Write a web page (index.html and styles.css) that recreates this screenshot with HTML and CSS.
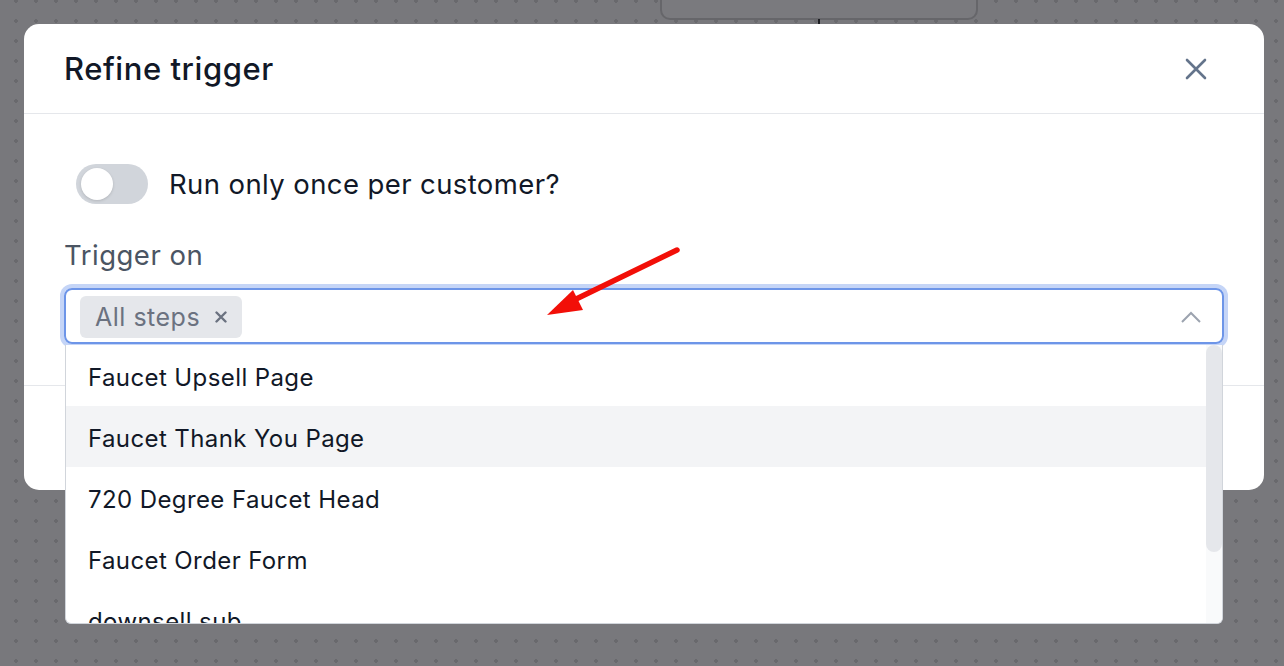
FILE: index.html
```html
<!DOCTYPE html>
<html>
<head>
<meta charset="utf-8">
<link rel="stylesheet" href="styles.css">
</head>
<body>
<div class="canvas">
  <div class="node"></div>
  <div class="connector"></div>
</div>
<div class="overlay">
  <div class="modal">
    <div class="modal-header">
      <h2 class="title">Refine trigger</h2>
      <button class="close" aria-label="Close">
        <svg width="22" height="22" viewBox="0 0 22 22"><path d="M2 2L20 20M20 2L2 20" stroke="#64748b" stroke-width="2.6" stroke-linecap="round" fill="none"/></svg>
      </button>
    </div>
    <div class="modal-body">
      <div class="toggle-row">
        <span class="toggle"><span class="knob"></span></span>
        <span class="toggle-label">Run only once per customer?</span>
      </div>
      <div class="field">
        <label class="field-label">Trigger on</label>
        <div class="select">
          <span class="chip">All steps <svg class="chip-x" width="12" height="12" viewBox="0 0 12 12"><path d="M1.5 1.5L10.5 10.5M10.5 1.5L1.5 10.5" stroke="#6b7280" stroke-width="2.4" stroke-linecap="round" fill="none"/></svg></span>
          <svg class="chevron" width="22" height="14" viewBox="0 0 22 14"><path d="M2 12L11 3L20 12" stroke="#9ca3af" stroke-width="2" fill="none"/></svg>
          <div class="dropdown">
            <div class="options">
              <div class="option">Faucet Upsell Page</div>
              <div class="option active">Faucet Thank You Page</div>
              <div class="option">720 Degree Faucet Head</div>
              <div class="option">Faucet Order Form</div>
              <div class="option">downsell sub</div>
            </div>
            <div class="scrollbar"><div class="thumb"></div></div>
          </div>
        </div>
      </div>
    </div>
    <div class="modal-footer"></div>
  </div>
</div>
<svg class="arrow" width="1284" height="666" viewBox="0 0 1284 666">
  <line x1="677" y1="250" x2="570" y2="302" stroke="#f20f08" stroke-width="5.5" stroke-linecap="round"/>
  <polygon points="547,315 573,290 583,310" fill="#f20f08"/>
</svg>
</body>
</html>
```
FILE: styles.css
```css
* { box-sizing: border-box; }
html, body { margin: 0; padding: 0; }
body {
  width: 1284px;
  height: 666px;
  overflow: hidden;
  position: relative;
  font-family: Inter, "Noto Sans", sans-serif;
  background-color: #78787c;
  background-image: radial-gradient(circle, #69696d 1.6px, transparent 2.1px);
  background-size: 20px 20px;
  background-position: 6px -9px;
}
.canvas { position: absolute; inset: 0; }
.node {
  position: absolute;
  left: 660px;
  top: -20px;
  width: 318px;
  height: 40px;
  border: 2px solid #66666a;
  border-radius: 10px;
  background: #7a7a7e;
}
.connector {
  position: absolute;
  left: 818px;
  top: 19px;
  width: 2px;
  height: 6px;
  background: #1e1f24;
}
.overlay {
  position: absolute;
  inset: 0;
  padding: 24px 20px 0 24px;
}
.modal {
  width: 1240px;
  height: 466px;
  background: #fff;
  border-radius: 15px;
  display: flex;
  flex-direction: column;
}
.modal-header {
  height: 90px;
  border-bottom: 1px solid #e5e7eb;
  display: flex;
  align-items: center;
  justify-content: space-between;
  padding: 0 57px 0 40px;
}
.title {
  margin: 0;
  font-size: 31px;
  font-weight: 500;
  color: #111827;
  letter-spacing: 0.55px;
}
.close {
  border: 0;
  background: none;
  padding: 0;
  width: 22px;
  height: 22px;
  display: flex;
}
.modal-body {
  height: 271px;
  padding: 50px 40px 0 40px;
}
.toggle-row {
  display: flex;
  align-items: center;
  gap: 21px;
  height: 40px;
  padding-left: 12px;
}
.toggle {
  width: 72px;
  height: 40px;
  border-radius: 20px;
  background: #d1d5db;
  display: flex;
  align-items: center;
  padding-left: 5px;
}
.knob {
  width: 32px;
  height: 32px;
  border-radius: 50%;
  background: #fff;
  box-shadow: 0 1px 3px rgba(0,0,0,0.15);
}
.toggle-label {
  font-size: 27.5px;
  color: #111827;
  letter-spacing: 0.4px;
}
.field { margin-top: 35px; }
.field-label {
  display: block;
  font-size: 27.5px;
  line-height: 32px;
  color: #4b5563;
  letter-spacing: 0.5px;
}
.select {
  position: relative;
  margin-top: 17px;
  height: 56px;
  border: 2px solid #6d95e8;
  border-radius: 8px;
  box-shadow: 0 0 0 4px #c5d5f7;
  display: flex;
  align-items: center;
  padding: 1px 0 0 14px;
}
.chip {
  height: 42px;
  display: inline-flex;
  align-items: center;
  gap: 15px;
  padding: 1px 15px 0 15px;
  background: #e5e7eb;
  border-radius: 6px;
  font-size: 25px;
  color: #6b7280;
  letter-spacing: 0.5px;
}
.chip-x { display: block; }
.chevron {
  position: absolute;
  right: 20px;
  top: 20px;
}
.dropdown {
  position: absolute;
  left: -1px;
  top: 55px;
  width: 1158px;
  height: 279px;
  background: #fff;
  border: 1px solid #d1d5db;
  border-top: 0;
  border-radius: 0 0 6px 6px;
  overflow: hidden;
  display: flex;
  z-index: 5;
}
.options {
  flex: 1;
  overflow: hidden;
}
.scrollbar {
  width: 16px;
  background: #f9fafb;
  flex: none;
}
.thumb {
  height: 207px;
  background: #e5e7eb;
  border-radius: 8px;
}
.option {
  height: 61px;
  display: flex;
  align-items: center;
  padding: 3px 0 0 22px;
  font-size: 24px;
  color: #111827;
  letter-spacing: 0.4px;
  white-space: nowrap;
}
.option.active { background: #f3f4f6; }
.modal-footer {
  flex: 1;
  border-top: 1px solid #e5e7eb;
}
.arrow {
  position: absolute;
  left: 0;
  top: 0;
  pointer-events: none;
  z-index: 10;
}
```
